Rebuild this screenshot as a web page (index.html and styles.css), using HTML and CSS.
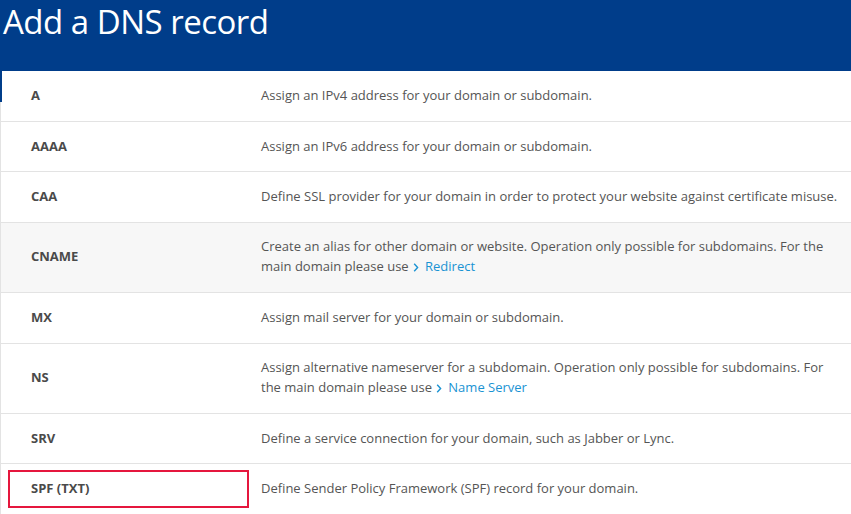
FILE: index.html
```html
<!DOCTYPE html>
<html>
<head>
<meta charset="utf-8">
<link rel="stylesheet" href="styles.css">
</head>
<body>
<header class="hero"><h1 class="title">Add a DNS record</h1></header>
<div class="records">
  <div class="row row-first"><div class="name">A</div><div class="desc">Assign an IPv4 address for your domain or subdomain.</div></div>
  <div class="row"><div class="name">AAAA</div><div class="desc">Assign an IPv6 address for your domain or subdomain.</div></div>
  <div class="row"><div class="name">CAA</div><div class="desc">Define SSL provider for your domain in order to protect your website against certificate misuse.</div></div>
  <div class="row row-hover"><div class="name">CNAME</div><div class="desc">Create an alias for other domain or website. Operation only possible for subdomains. For the main domain please use <a class="link" href="#"><svg class="chev" width="6" height="9" viewBox="0 0 6 9"><path d="M1.2 0.8 L4.6 4.5 L1.2 8.2" fill="none" stroke="#1a93d3" stroke-width="1.4"/></svg>Redirect</a></div></div>
  <div class="row"><div class="name">MX</div><div class="desc">Assign mail server for your domain or subdomain.</div></div>
  <div class="row"><div class="name">NS</div><div class="desc">Assign alternative nameserver for a subdomain. Operation only possible for subdomains. For the main domain please use <a class="link" href="#"><svg class="chev" width="6" height="9" viewBox="0 0 6 9"><path d="M1.2 0.8 L4.6 4.5 L1.2 8.2" fill="none" stroke="#1a93d3" stroke-width="1.4"/></svg>Name Server</a></div></div>
  <div class="row"><div class="name">SRV</div><div class="desc">Define a service connection for your domain, such as Jabber or Lync.</div></div>
  <div class="row row-marked"><div class="name">SPF (TXT)</div><div class="desc">Define Sender Policy Framework (SPF) record for your domain.</div><span class="highlight"></span></div>
</div>
</body>
</html>
```
FILE: styles.css
```css
html, body {
  margin: 0;
  padding: 0;
  background: #fff;
}
body {
  width: 851px;
  height: 514px;
  overflow: hidden;
  font-family: "Open Sans", "DejaVu Sans", sans-serif;
  font-size: 13px;
  color: #555;
}
.hero {
  background: #003d8a;
  height: 71px;
  box-sizing: border-box;
  padding: 0 0 0 3px;
}
.title {
  margin: 0;
  font-weight: 400;
  font-size: 33px;
  line-height: 44px;
  color: #fff;
  letter-spacing: -0.5px;
}
.records {
  border-left: 1px solid #e3e3e3;
}
.row {
  position: relative;
  display: flex;
  align-items: center;
  padding: 13.6px 0 15.8px;
  border-bottom: 1px solid #e3e3e3;
  line-height: 20px;
}
.row-first {
  padding-top: 14.2px;
}
.row-first::before {
  content: "";
  position: absolute;
  left: -1px;
  top: 0;
  width: 2px;
  height: 31px;
  background: #003d8a;
}
.row-hover {
  background: #f7f7f7;
}
.name {
  flex: 0 0 230px;
  padding-left: 30px;
  font-weight: 700;
  color: #4a4a4a;
}
.desc {
  flex: 1;
  padding-right: 8px;
}
.link {
  color: #1a93d3;
  text-decoration: none;
}
.chev {
  display: inline-block;
  vertical-align: -1px;
  margin: 0 6px 0 1px;
}
.highlight {
  position: absolute;
  left: 7px;
  top: 6px;
  width: 241px;
  height: 38px;
  box-sizing: border-box;
  border: 2px solid #e5173d;
}
```
